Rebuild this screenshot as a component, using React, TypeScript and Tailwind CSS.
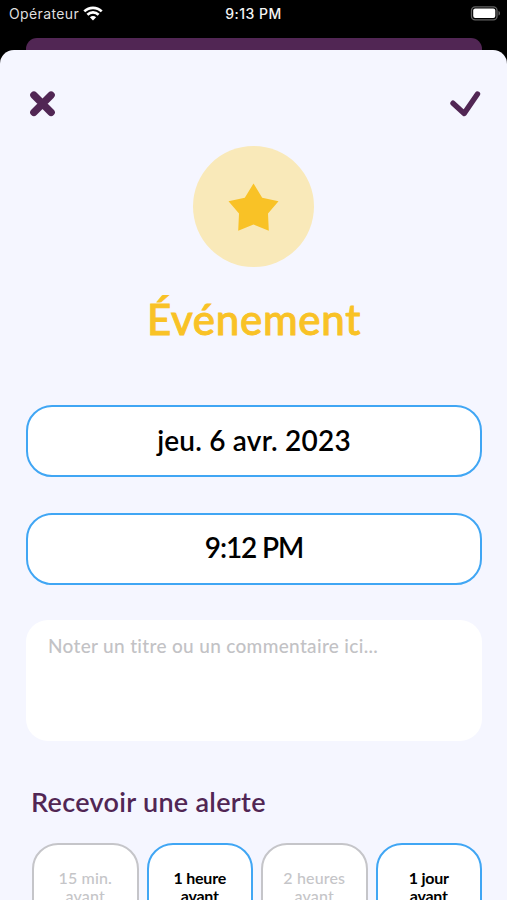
const alerts = [
  { delay: '15 min.', active: false },
  { delay: '1 heure', active: true },
  { delay: '2 heures', active: false },
  { delay: '1 jour', active: true },
];

function StatusBar() {
  return (
    <header className="grid h-[38px] grid-cols-3 items-start font-['Inter','Liberation_Sans',sans-serif] text-[13px] leading-7 text-white">
      <div className="flex items-center pl-[9px] text-[#dedede]">
        <span className="text-[14px] tracking-[0.38px]">Opérateur</span>
        <svg className="ml-1 h-[15px] w-5 -translate-y-px" viewBox="0 0 20 15" fill="none" stroke="white" strokeWidth="2.7">
          <path d="M1.3 5.4C6.3.6 13.7.6 18.7 5.4" />
          <path d="M4.4 8.7c3.2-3 8-3 11.2 0" />
          <path d="M10 14.4 6.9 11.3c1.8-1.6 4.4-1.6 6.2 0Z" fill="white" stroke="none" />
        </svg>
      </div>
      <div className="text-center text-[14px] font-medium text-[#f4f4f4] tracking-[0.5px]">9:13 PM</div>
      <div className="flex justify-end pr-[6px] pt-[6px]">
        <svg width="31" height="15" viewBox="0 0 31 15">
          <rect x="1.5" y=".8" width="25.5" height="13" rx="3.6" fill="none" stroke="#626262" strokeWidth="1.3" />
          <rect x="3.2" y="2.5" width="22.1" height="9.6" rx="2" fill="white" />
          <path d="M28.5 5v4.6c2-.6 2-4 0-4.6Z" fill="#626262" />
        </svg>
      </div>
    </header>
  );
}

export default function App() {
  return (
    <main className="flex h-[900px] w-[507px] flex-col overflow-hidden bg-black font-['Lato','Liberation_Sans',sans-serif] [font-variant-ligatures:none]">
      <StatusBar />
      <div className="ml-[26px] mr-[25px] h-3 shrink-0 rounded-t-[11px] bg-[#512654]" />
      <section className="h-[850px] shrink-0 overflow-hidden rounded-t-[14px] bg-[#f5f6ff] pl-[26px] pr-[25px] pt-10">
        <div className="flex items-center justify-between pl-[3px]">
          <button aria-label="Fermer">
            <svg width="27" height="28" viewBox="0 0 27 28" fill="none" stroke="#512654" strokeWidth="7.4" strokeLinecap="round">
              <path d="M4.9 5.1 22.1 22.4M22.1 5.1 4.9 22.4" />
            </svg>
          </button>
          <button aria-label="Valider">
            <svg width="32" height="28" viewBox="0 0 32 28" fill="none" stroke="#512654" strokeWidth="5.4" strokeLinecap="round" strokeLinejoin="round">
              <path d="M3 13.2 14.2 23.4 27.5 4" />
            </svg>
          </button>
        </div>

        <div className="ml-[167px] mt-7 flex size-[121px] items-center justify-center rounded-full bg-[#f9e9b9]">
          <svg width="51" height="50" viewBox="0 0 51 50" fill="#f9c226">
            <path d="M25.5 1.5 34.2 15.8 50.5 19.2 40 31.5 40.8 48.8 25.5 42.5 10.2 48.8 11 31.5.5 19.2l16.3-3.4Z" />
          </svg>
        </div>
        <h1 className="mt-[27px] text-center text-[42px] leading-[50px] font-medium tracking-[0.7px] text-[#f9c226] [-webkit-text-stroke:0.9px_#f9c226]">Événement</h1>

        <button className="mt-[61px] flex h-[72px] w-full items-center justify-center rounded-[26px] border-2 border-[#40a6f4] bg-white pb-0.5 text-[28px] font-semibold tracking-[0.2px] text-black">jeu. 6 avr. 2023</button>
        <button className="mt-9 flex h-[72px] w-full items-center justify-center rounded-[26px] border-2 border-[#40a6f4] bg-white pb-1 text-[28px] font-semibold tracking-[-1.1px] text-black">9:12 PM</button>
        <textarea className="mt-[35px] block h-[121px] w-full resize-none rounded-[22px] bg-white px-[22px] py-[14px] text-[19px] leading-6 font-medium tracking-[0.33px] placeholder:text-[#c2c2c5] placeholder:opacity-100" placeholder="Noter un titre ou un commentaire ici..." />
        <h2 className="mt-11 pl-[5px] text-[27px] leading-[34px] font-semibold tracking-[0.3px] text-[#512654]">Recevoir une alerte</h2>
        <div className="mt-[24px] grid grid-cols-4 gap-2 pl-[6px]">
          {alerts.map(({ delay, active }) => (
            <button
              key={delay}
              className={`flex h-[107px] flex-col items-center rounded-[26px] border-2 bg-white pt-6 text-[16px] leading-[18px] ${active ? 'border-[#40a6f4] font-bold tracking-[-0.2px] text-black' : 'border-[#c5c5c9] font-medium tracking-[0.15px] text-[#c5c5c8]'}`}
            >
              <span>{delay}</span>
              <span>avant</span>
            </button>
          ))}
        </div>
      </section>
    </main>
  );
}
